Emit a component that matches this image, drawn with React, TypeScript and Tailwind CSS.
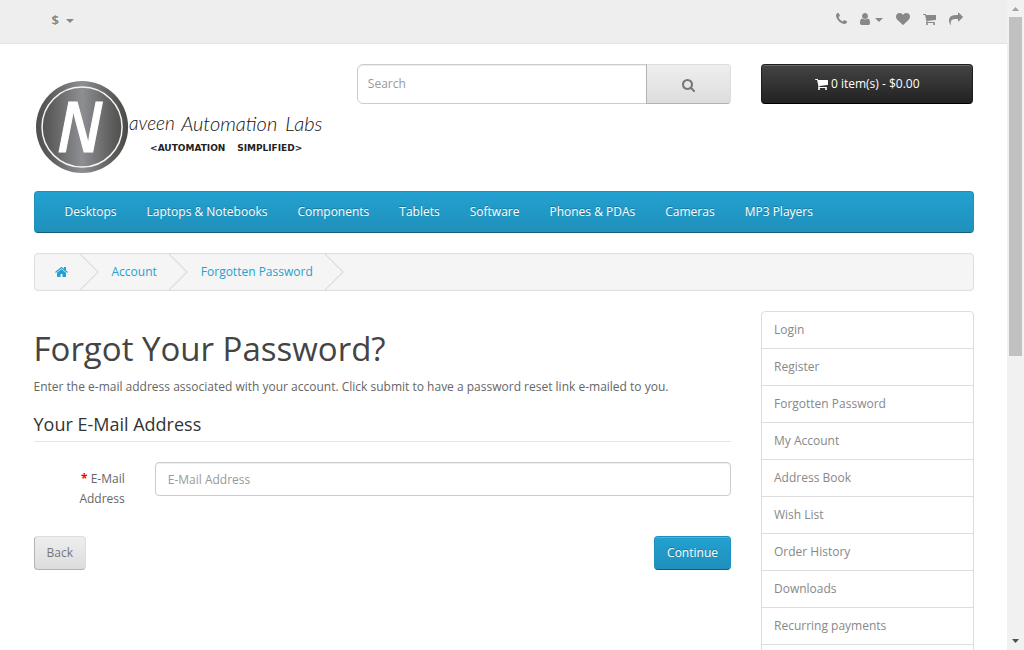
import React from "react";

const GLYPHS = {
  phone: {
    box: "192 0 1408 1792",
    size: "w-[11px] h-3.5",
    d: "M1600 1240q0 27-10 70.5t-21 68.5q-21 50-122 106-94 51-186 51-27 0-53-3.5t-57.5-12.5-47-14.5-55.5-20.5-49-18q-98-35-175-83-127-79-264-216t-216-264q-48-77-83-175-3-9-18-49t-20.5-55.5-14.5-47-12.5-57.5-3.5-53q0-92 51-186 56-101 106-122 25-11 68.5-21t70.5-10q14 0 21 3 18 6 53 76 11 19 30 54t35 63.5 31 53.5q3 4 17.5 25t21.5 35.5 7 28.5q0 20-28.5 50t-62 55-62 53-28.5 46q0 9 5 22.5t8.5 20.5 14 24 11.5 19q76 137 174 235t235 174q2 1 19 11.5t24 14 20.5 8.5 22.5 5q18 0 46-28.5t53-62 55-62 50-28.5q14 0 28.5 7t35.5 21.5 25 17.5q25 15 53.5 31t63.5 35 54 30q70 35 76 53 3 7 3 21z",
  },
  user: {
    box: "256 0 1280 1792",
    size: "w-2.5 h-3.5",
    d: "M1536 1399q0 109-62.5 187t-150.5 78h-854q-88 0-150.5-78t-62.5-187q0-85 8.5-160.5t31.5-152 58.5-131 94-89 134.5-34.5q131 128 313 128t313-128q76 0 134.5 34.5t94 89 58.5 131 31.5 152 8.5 160.5zm-256-887q0 159-112.5 271.5t-271.5 112.5-271.5-112.5-112.5-271.5 112.5-271.5 271.5-112.5 271.5 112.5 112.5 271.5z",
  },
  heart: {
    box: "0 0 1792 1792",
    size: "w-3.5 h-3.5",
    d: "M896 1664q-26 0-44-18l-624-602q-10-8-27.5-26t-55.5-65.5-68-97.5-53.5-121-23.5-138q0-220 127-344t351-124q62 0 126.5 21.5t120 58 95.5 68.5 76 68q36-36 76-68t95.5-68.5 120-58 126.5-21.5q224 0 351 124t127 344q0 221-229 450l-623 600q-18 18-44 18z",
  },
  cart: {
    box: "64 0 1664 1792",
    size: "w-[13px] h-3.5",
    d: "M704 1536q0 52-38 90t-90 38-90-38-38-90 38-90 90-38 90 38 38 90zm896 0q0 52-38 90t-90 38-90-38-38-90 38-90 90-38 90 38 38 90zm128-1088v512q0 24-16.5 42.5t-40.5 21.5l-1044 122q13 60 13 70 0 16-24 64h920q26 0 45 19t19 45-19 45-45 19h-1024q-26 0-45-19t-19-45q0-11 8-31.5t16-36 21.5-40 15.5-29.5l-177-823h-204q-26 0-45-19t-19-45 19-45 45-19h256q16 0 28.5 6.5t19.5 15.5 13 24.5 8 26 5.5 29.5 4.5 26h1201q26 0 45 19t19 45z",
  },
  share: {
    box: "0 0 1792 1792",
    size: "w-3.5 h-3.5",
    d: "M1792 640q0 26-19 45l-512 512q-19 19-45 19t-45-19-19-45v-256h-224q-98 0-175.5 6t-154 21.5-133 42.5-105.5 69.5-80 101-48.5 138.5-17.5 181q0 55 5 123 0 6 2.5 23.5t2.5 26.5q0 15-8.5 25t-23.5 10q-16 0-28-17-7-9-13-22t-13.5-30-10.5-24q-127-285-127-451 0-199 53-333 162-403 875-403h224v-256q0-26 19-45t45-19 45 19l512 512q19 19 19 45z",
  },
  search: {
    box: "64 128 1664 1664",
    size: "w-[13px] h-[13px]",
    d: "M1216 832q0-185-131.5-316.5t-316.5-131.5-316.5 131.5-131.5 316.5 131.5 316.5 316.5 131.5 316.5-131.5 131.5-316.5zm512 832q0 52-38 90t-90 38q-54 0-90-38l-343-342q-179 124-399 124-143 0-273.5-55.5t-225-150-150-225-55.5-273.5 55.5-273.5 150-225 225-150 273.5-55.5 273.5 55.5 225 150 150 225 55.5 273.5q0 220-124 399l343 343q37 37 37 90z",
  },
  home: {
    box: "64 0 1664 1792",
    size: "w-[13px] h-3.5",
    d: "M1472 992v480q0 26-19 45t-45 19h-384v-384h-256v384h-384q-26 0-45-19t-19-45v-480q0-1 .5-3t.5-3l575-474 575 474q1 2 1 6zm223-69l-62 74q-8 9-21 11h-3q-13 0-21-7l-692-577-692 577q-12 8-24 7-13-2-21-11l-62-74q-8-10-7-23.5t11-21.5l719-599q32-26 76-26t76 26l244 204v-195q0-14 9-23t23-9h192q14 0 23 9t9 23v408l219 182q10 8 11 21.5t-7 23.5z",
  },
  caret: {
    box: "0 0 8 14",
    size: "w-2 h-3.5",
    d: "M0 6h8L4 10z",
  },
};

function Icon({ name }: { name: keyof typeof GLYPHS }) {
  const g = GLYPHS[name];
  return (
    <svg viewBox={g.box} className={`${g.size} shrink-0 fill-current`} aria-hidden="true">
      <path d={g.d} />
    </svg>
  );
}

function Logo() {
  return (
    <svg viewBox="0 0 293 107" className="block w-full" role="img" aria-label="Naveen Automation Labs">
      <defs>
        <linearGradient id="disc" x1="0" x2="1" y1="0" y2="0">
          <stop offset="0" stopColor="#4f4f4f" />
          <stop offset="0.15" stopColor="#5c5c5c" />
          <stop offset="0.5" stopColor="#8e8f93" />
          <stop offset="0.85" stopColor="#5a5a59" />
          <stop offset="1" stopColor="#4a4a48" />
        </linearGradient>
      </defs>
      <circle cx="48" cy="56" r="46" fill="url(#disc)" />
      <circle cx="48" cy="56" r="40" fill="none" stroke="#f4f4f0" strokeWidth="1.5" />
      <text x="23" y="81" fontSize="76" fontStyle="italic" fontFamily="'Liberation Mono', monospace" fill="#fff" stroke="#fff" strokeWidth="1">N</text>
      <g fontFamily="Lato, sans-serif" fontStyle="italic" fontWeight="300" fill="#111">
        <text x="95" y="59" fontSize="19">aveen</text>
        <text x="147" y="60" fontSize="20">Automation</text>
        <text x="251" y="60" fontSize="20">Labs</text>
      </g>
      <g fontSize="9" fontWeight="700" fontFamily="'DejaVu Sans', sans-serif" fill="#222">
        <text x="116" y="80">{"<AUTOMATION"}</text>
        <text x="268" y="80" textAnchor="end">{"SIMPLIFIED>"}</text>
      </g>
    </svg>
  );
}

function Crumb({ children }: { children: React.ReactNode }) {
  return (
    <li className="flex items-center">
      <a href="#" className="text-[#23a1d1]">{children}</a>
      <svg viewBox="0 0 19 36" className="ml-3 mr-[13px] h-9 w-[19px]" fill="none" stroke="#ddd" strokeWidth="1.2" aria-hidden="true">
        <path d="M0 0l18 18L0 36" />
      </svg>
    </li>
  );
}

const CATEGORIES = ["Desktops", "Laptops & Notebooks", "Components", "Tablets", "Software", "Phones & PDAs", "Cameras", "MP3 Players"];
const ACCOUNT_LINKS = ["Login", "Register", "Forgotten Password", "My Account", "Address Book", "Wish List", "Order History", "Downloads", "Recurring payments", "Reward Points"];

function TopBar() {
  return (
    <nav className="border-b border-[#e2e2e2] bg-[#eee] text-[#888]">
      <div className="mx-auto flex h-[43px] max-w-[970px] items-start justify-between pt-3 pr-[26px] pl-[33px]">
        <button type="button" className="flex items-center gap-[7px] text-[13px] leading-4 text-shadow-[0_1px_0_#fff]" aria-label="Currency">
          <strong>$</strong>
          <Icon name="caret" />
        </button>
        <ul className="flex items-center gap-[13px]">
          <li><a href="#" aria-label="Telephone"><Icon name="phone" /></a></li>
          <li><a href="#" aria-label="My Account" className="flex items-center gap-[5px]"><Icon name="user" /><Icon name="caret" /></a></li>
          <li><a href="#" aria-label="Wish List"><Icon name="heart" /></a></li>
          <li><a href="#" aria-label="Shopping Cart"><Icon name="cart" /></a></li>
          <li><a href="#" aria-label="Checkout"><Icon name="share" /></a></li>
        </ul>
      </div>
    </nav>
  );
}

function Header() {
  return (
    <header className="grid grid-cols-12 gap-[30px] pt-5">
      <div className="col-span-4 pt-[7px] pb-[13px]">
        <a href="#"><Logo /></a>
      </div>
      <form className="col-span-5 flex h-10">
        <input
          type="text"
          aria-label="Search"
          placeholder="Search"
          className="min-w-0 flex-1 rounded-l-md border border-[#ccc] px-2.5 shadow-[inset_0_1px_1px_rgba(0,0,0,0.075)] placeholder:text-[#999]"
        />
        <button
          type="button"
          aria-label="Submit search"
          className="-ml-px flex w-[85px] items-center justify-center rounded-r border border-[#ddd] border-b-[#b3b3b3] border-l-[#b3b3b3] bg-linear-to-b from-[#eee] to-[#ddd] pt-0.5 text-[#777]"
        >
          <Icon name="search" />
        </button>
      </form>
      <div className="col-span-3">
        <button
          type="button"
          className="flex h-10 w-full items-center justify-center gap-[3px] rounded border border-[#1f1f1f] border-b-black bg-linear-to-b from-[#444] to-[#222] text-white shadow-[inset_0_1px_0_rgba(255,255,255,0.2)]"
        >
          <Icon name="cart" />
          <span>0 item(s) - $0.00</span>
        </button>
      </div>
    </header>
  );
}

function ForgotForm() {
  return (
    <main className="col-span-9">
      <h1 className="mt-5 mb-2.5 text-[33px] leading-9 text-[#444]">Forgot Your Password?</h1>
      <p className="mb-2.5">Enter the e-mail address associated with your account. Click submit to have a password reset link e-mailed to you.</p>
      <form>
        <h2 className="mb-5 border-b border-[#e5e5e5] py-[7px] text-lg leading-5 text-[#333]">Your E-Mail Address</h2>
        <div className="grid grid-cols-12 gap-[30px]">
          <label htmlFor="email" className="col-span-2 pt-[7px] text-right">
            <span className="font-bold text-[#f00]">* </span>E-Mail Address
          </label>
          <input
            id="email"
            type="text"
            placeholder="E-Mail Address"
            className="col-span-10 h-[34px] rounded border border-[#ccc] px-3 shadow-[inset_0_1px_1px_rgba(0,0,0,0.075)] placeholder:text-[#999]"
          />
        </div>
        <div className="mt-[27px] flex justify-between">
          <a
            href="#"
            className="rounded border border-[#ddd] border-b-[#b3b3b3] border-l-[#b3b3b3] bg-linear-to-b from-[#eee] to-[#ddd] px-3 py-1.5 text-[#777]"
          >
            Back
          </a>
          <button
            type="submit"
            className="rounded border border-[#1f90bb] border-b-[#145e7a] bg-linear-to-b from-[#23a1d1] to-[#1f90bb] px-3 py-1.5 text-white shadow-[inset_0_1px_0_rgba(255,255,255,0.2)] text-shadow-[0_-1px_0_rgba(0,0,0,0.25)]"
          >
            Continue
          </button>
        </div>
      </form>
    </main>
  );
}

function Scrollbar() {
  return (
    <div className="flex w-[17px] shrink-0 flex-col items-center bg-[#f1f1f1]" aria-hidden="true">
      <svg viewBox="0 0 17 17" className="h-[17px] w-[17px] shrink-0"><path d="M5 11h7L8.500 7z" fill="#a3a3a3" /></svg>
      <div className="w-full flex-1 px-0.5"><div className="h-[55%] bg-[#c1c1c1]" /></div>
      <svg viewBox="0 0 17 17" className="h-[17px] w-[17px] shrink-0"><path d="M5 6h7L8.500 10z" fill="#505050" /></svg>
    </div>
  );
}

export default function App() {
  return (
    <div className="flex h-screen overflow-hidden bg-white font-['Open_Sans',sans-serif] text-xs leading-5 text-[#666]">
      <div className="min-w-0 flex-1 overflow-hidden">
        <TopBar />
        <div className="mx-auto max-w-[970px] px-[15px]">
          <Header />
          <nav className="mb-5 rounded border border-[#1f90bb] border-b-[#145e7a] bg-linear-to-b from-[#23a1d1] to-[#1f90bb] px-[15px]">
            <ul className="flex">
              {CATEGORIES.map((name) => (
                <li key={name}>
                  <a href="#" className="block px-[15px] py-2.5 whitespace-nowrap text-white text-shadow-[0_-1px_0_rgba(0,0,0,0.25)]">{name}</a>
                </li>
              ))}
            </ul>
          </nav>
          <ul className="mb-5 flex rounded border border-[#ddd] bg-[#f5f5f5] pl-5">
            <Crumb><Icon name="home" /></Crumb>
            <Crumb>Account</Crumb>
            <Crumb>Forgotten Password</Crumb>
          </ul>
          <div className="grid grid-cols-12 items-start gap-[30px]">
            <ForgotForm />
            <aside className="col-span-3">
              <ul className="divide-y divide-[#ddd] rounded border border-[#ddd]">
                {ACCOUNT_LINKS.map((name) => (
                  <li key={name}><a href="#" className="block px-3 py-2 text-[#888]">{name}</a></li>
                ))}
              </ul>
            </aside>
          </div>
        </div>
      </div>
      <Scrollbar />
    </div>
  );
}
